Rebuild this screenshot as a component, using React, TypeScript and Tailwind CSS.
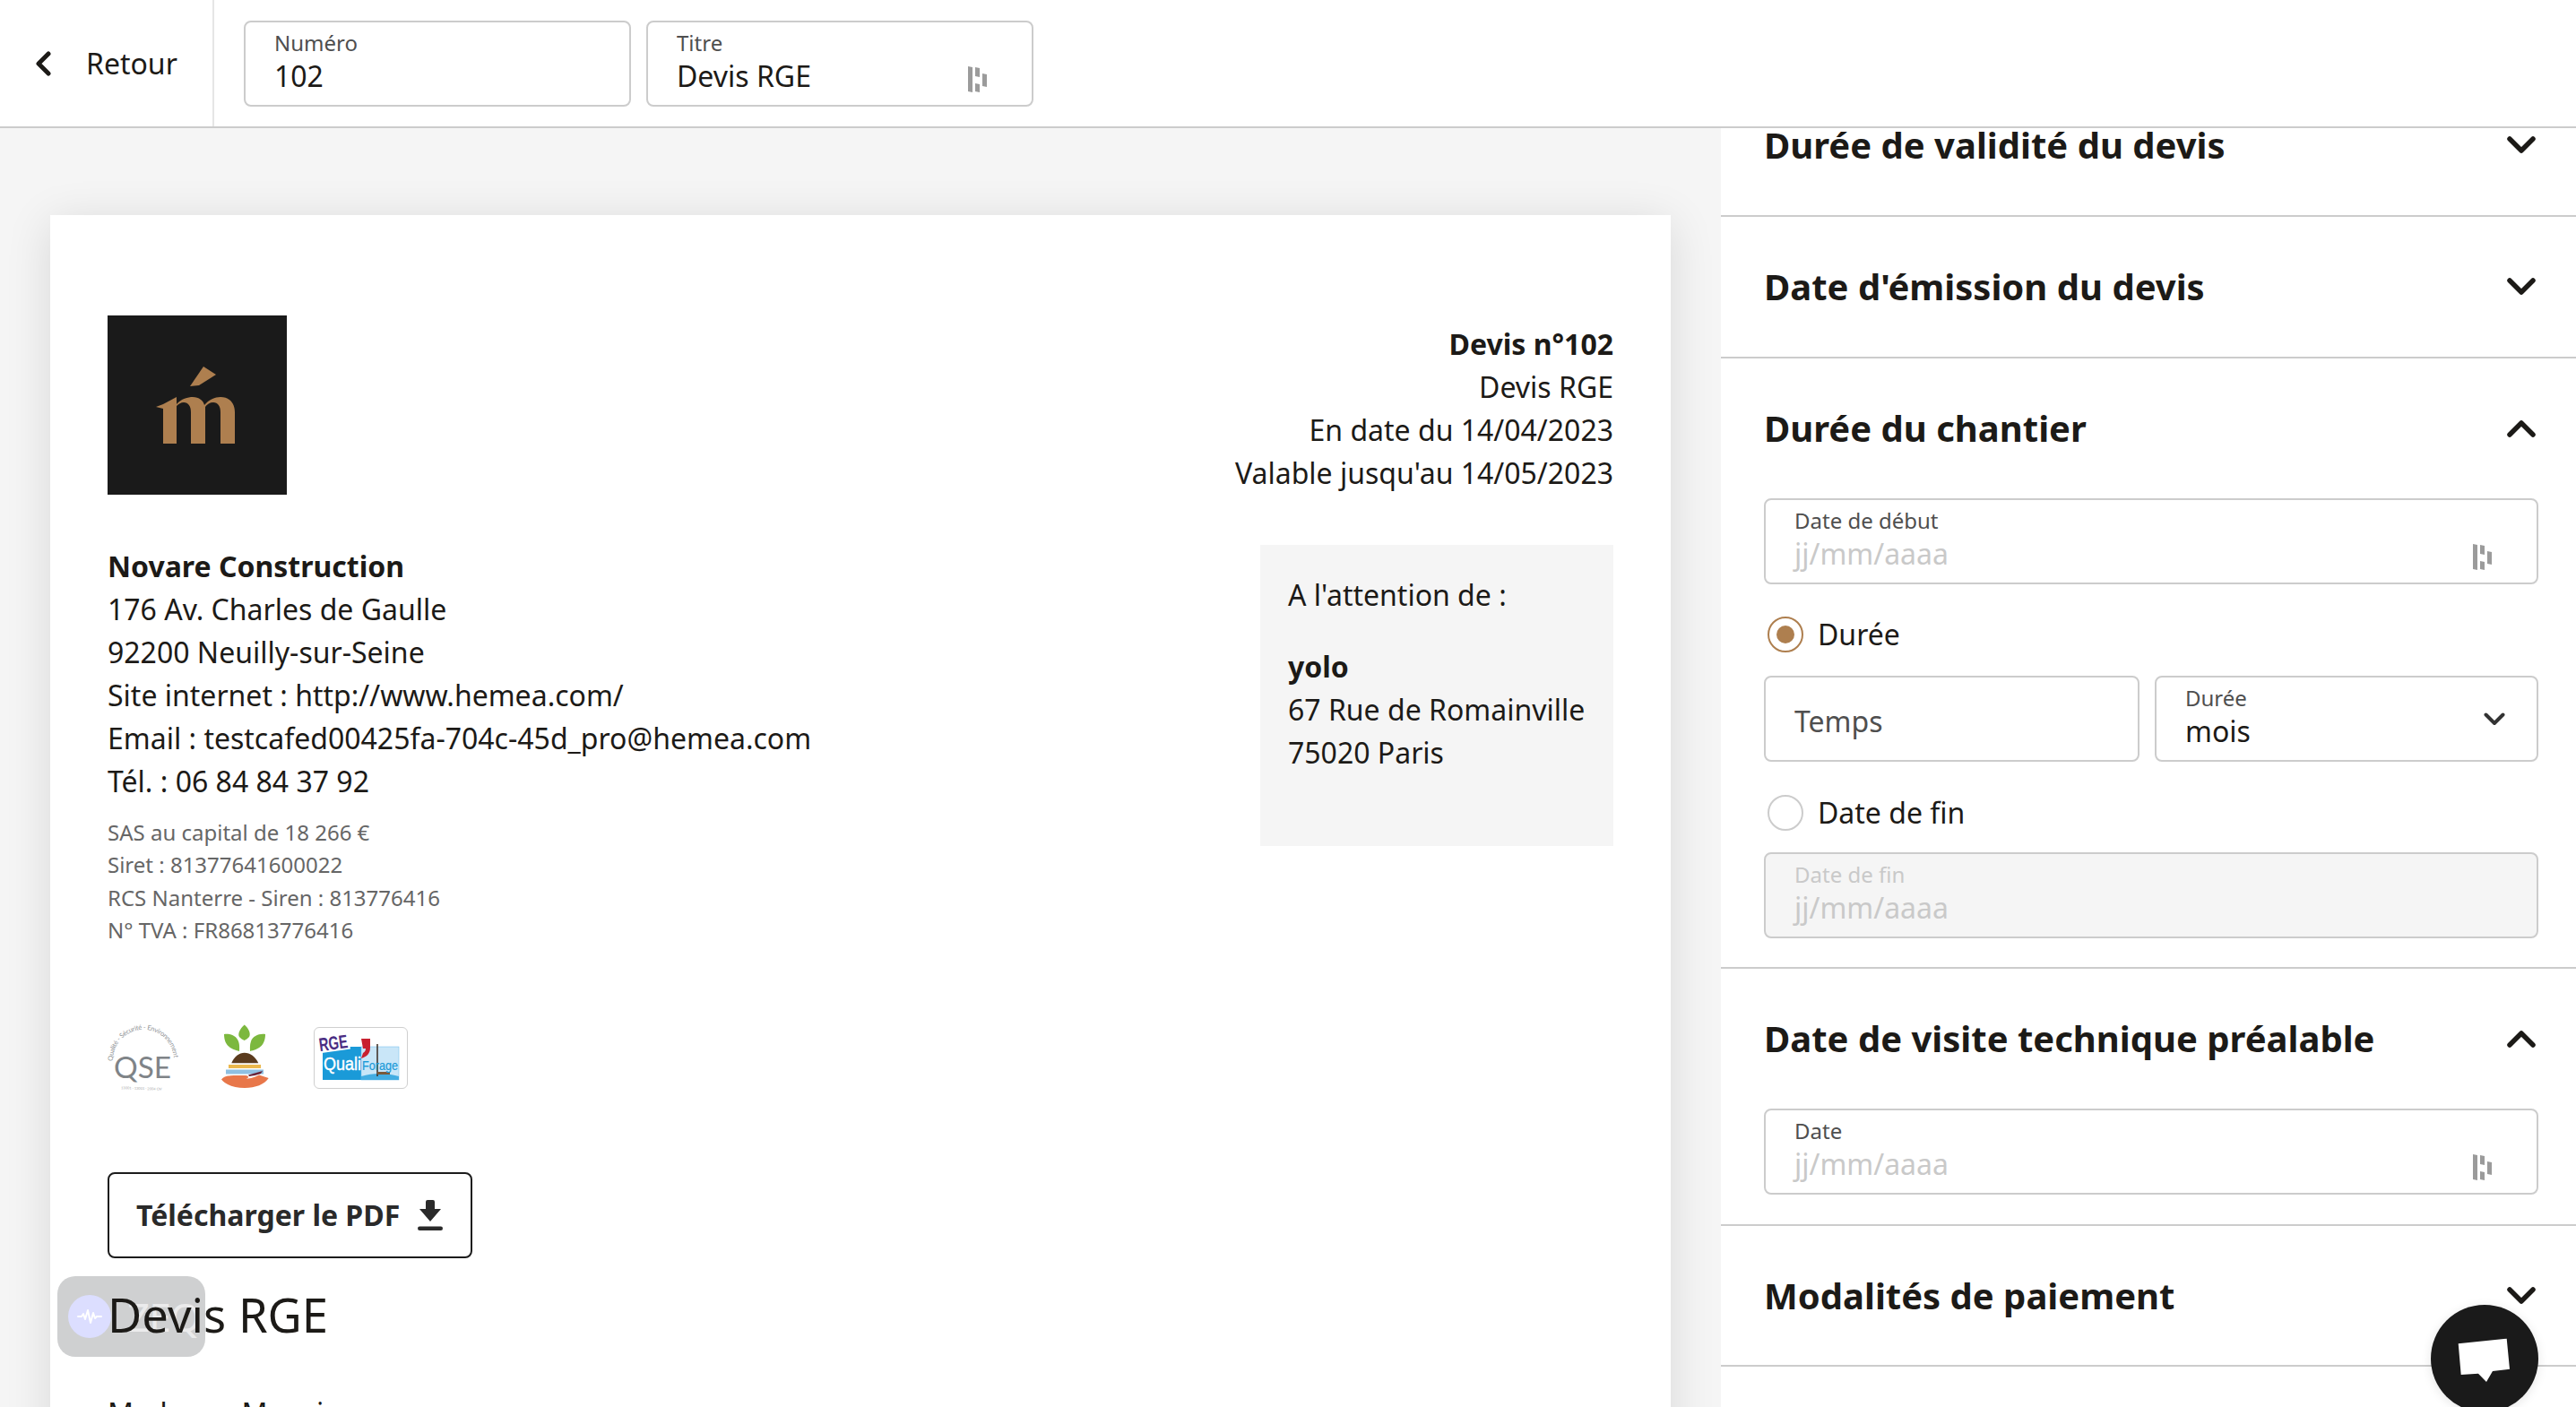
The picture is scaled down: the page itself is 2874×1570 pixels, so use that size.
import React from "react";

const FONT = "font-['Noto_Sans',sans-serif]";

function DashIcon() {
  return (
    <svg viewBox="0 0 21 29" className="absolute right-[50px] bottom-[14px] w-[21px] h-[29px]" fill="#9b9b9b">
      <path d="M0 0l5 1v28l-5-1z" />
      <path d="M8 1l5 1v10l-5-1z" />
      <path d="M8 19l5 1v9l-5-1z" />
      <path d="M16 8l5 1v14l-5-1z" />
    </svg>
  );
}

function Field({ label, value, icon, muted, disabled, className }: { label: string; value: string; icon?: boolean; muted?: boolean; disabled?: boolean; className: string }) {
  return (
    <div className={`relative h-[96px] rounded-lg border-2 border-[#cccccc] px-8 pt-[7px] ${disabled ? "bg-[#f5f5f5]" : "bg-white"} ${className}`}>
      <div className={`text-[24px] leading-[32px] ${disabled ? "text-[#c9c9c9]" : "text-[#4f4f4f]"}`}>{label}</div>
      <div className={`text-[32px] leading-[42px] ${muted ? "text-[#c9c9c9]" : "text-[#1c1a17]"}`}>{value}</div>
      {icon && <DashIcon />}
    </div>
  );
}

function Chevron({ up }: { up?: boolean }) {
  return (
    <svg viewBox="0 0 32 20" className="w-[32px] h-[20px]" fill="none" stroke="#1c1a17" strokeWidth="5.5" strokeLinecap="round" strokeLinejoin="round">
      <polyline points={up ? "3,17 16,4 29,17" : "3,3 16,16 29,3"} />
    </svg>
  );
}

function SectionHead({ title, up, className }: { title: string; up?: boolean; className: string }) {
  return (
    <div className={`flex items-center justify-between pl-12 pr-[45px] ${className}`}>
      <h2 className="text-[40px] leading-[56px] font-bold text-[#1c1a17]">{title}</h2>
      <Chevron up={up} />
    </div>
  );
}

function Radio({ checked, label }: { checked?: boolean; label: string }) {
  return (
    <div className="flex items-center h-[40px] pl-[4px] gap-[16px]">
      <span className={`w-[40px] h-[40px] rounded-full border-2 flex items-center justify-center ${checked ? "border-[#ae7f4f]" : "border-[#cccccc]"}`}>
        {checked && <span className="w-[20px] h-[20px] rounded-full bg-[#ae7f4f]" />}
      </span>
      <span className="text-[32px] leading-[48px] text-[#1c1a17]">{label}</span>
    </div>
  );
}

function Logo() {
  return (
    <svg viewBox="0 0 200 200" className="w-[200px] h-[200px] block">
      <rect width="200" height="200" fill="#1a1a1a" />
      <path fill="#ae7f4f" d="M107 57L121 66L102 78L92 79Z" />
      <path fill="#ae7f4f" d="M54 102L62 99L77 91V99C82 93 90 91 95 91C102 91 107 95 108 100C113 94 120 91 126 91C136 91 142 98 142 108V143H126V108C126 101 123 97 118 97C114 97 111 99 109 102V143H93V108C93 101 90 97 85 97C82 97 79 99 77 101V143H62V104Z" />
    </svg>
  );
}

function QseLogo() {
  return (
    <svg viewBox="0 0 80 78" className="w-[80px] h-[78px] block overflow-visible">
      <defs>
        <path id="qse-arc" d="M6 42A34 34 0 1 1 74 40" />
      </defs>
      <text fontFamily="Lato" fontSize="7.5" fill="#8f9396">
        <textPath href="#qse-arc" textLength="105">Qualité - Sécurité - Environnement</textPath>
      </text>
      <text x="7" y="61" fontFamily="Lato" fontSize="33" fontWeight="400" fill="#7f8488" textLength="64" lengthAdjust="spacingAndGlyphs">QSE</text>
      <text x="15" y="74" fontFamily="Lato" fontSize="4" fill="#a5a7a9" transform="rotate(2 40 74)">13001 · 13001 · 2004 OV</text>
    </svg>
  );
}

function LeafLogo() {
  return (
    <svg viewBox="0 0 53 71" className="w-[53px] h-[71px] block">
      <path fill="#7cb83e" d="M25.7 0.5C31 5 33 11 31 14C29.5 16 27 17 25.7 18C24 17 21.500 16 20 14C18 11 20.500 5 25.700 0.500Z" />
      <path fill="#7cb83e" d="M3 11C10 10 17 13 19 19C20.500 23 20 27 20 30C12 28 3 25 3 11Z" />
      <path fill="#7cb83e" d="M49 11C42 10 35 13 33 19C31.500 23 32 27 32 30C40 28 49 25 49 11Z" />
      <path fill="#5b3b1e" d="M11.300 43.300C14 36 20 31.700 25.700 31.700C32 31.700 38 36 41.300 43.300Z" />
      <rect x="8" y="45" width="36" height="4" fill="#ebb84d" />
      <rect x="5" y="50.500" width="42" height="5" fill="#8fc0e2" />
      <path fill="#e8774a" d="M0 61.500C3 58 8 57 14 57H27C31 57 31 60.500 27 61H20C28 61.500 36 60 42 56.500L52.700 60C48 67 38 71 26 71C14 71 4 67 0 61.500Z" />
      <path fill="#6a2338" d="M30 56.500L46 52L44 55C40 56.500 35 57.500 31 58Z" />
    </svg>
  );
}

function RgeLogo() {
  return (
    <div className="w-[105px] h-[69px] rounded-[6px] border border-[#cfcfcf] bg-white overflow-hidden">
      <svg viewBox="0 0 103 67" className="w-full h-full block">
        <rect x="9" y="21" width="43" height="37" fill="#1a9ad8" />
        <rect x="52" y="21" width="42" height="37" fill="#c9e6f8" stroke="#6cbdea" strokeWidth="0.5" />
        <path d="M52 54C65 50 80 50 94 54V58H52Z" fill="#43ade2" />
        <path d="M70 18V54" stroke="#3a2a20" strokeWidth="1.500" />
        <rect x="70" y="49" width="14" height="3" fill="#7a5a3a" />
        <path d="M52 12H62V22C62 29 58 32 52 34L54 28C56 27 57 25 57 23H54Z" fill="#c8202f" />
        <g transform="rotate(-8 22 18)">
          <rect x="3" y="7" width="36" height="19" fill="#ffffff" />
          <text x="5" y="24" fontFamily="Liberation Sans" fontSize="21" fontWeight="700" fill="#4b2e83" textLength="32" lengthAdjust="spacingAndGlyphs">RGE</text>
        </g>
        <text x="10" y="47" fontFamily="Liberation Sans" fontSize="20" fill="#ffffff" stroke="#ffffff" strokeWidth="0.4" textLength="42" lengthAdjust="spacingAndGlyphs">Quali</text>
        <text x="53" y="47" fontFamily="Liberation Sans" fontSize="15" fill="#1a9ad8" stroke="#1a9ad8" strokeWidth="0.2" textLength="40" lengthAdjust="spacingAndGlyphs">Forage</text>
      </svg>
    </div>
  );
}

export default function App() {
  return (
    <div className={`relative w-[2874px] h-[1570px] overflow-hidden bg-[#f5f5f5] text-[#1c1a17] ${FONT}`}>
      <header className="relative z-10 h-[143px] bg-white border-b-2 border-[#cccccc] flex">
        <div className="w-[239px] border-r-2 border-[#e6e6e6] flex items-center pl-[39px] gap-[39px]">
          <svg viewBox="0 0 18 28" className="w-[18px] h-[28px]" fill="none" stroke="#1c1a17" strokeWidth="5" strokeLinecap="round" strokeLinejoin="round">
            <polyline points="15,3 4,14 15,25" />
          </svg>
          <span className="text-[32px] leading-[48px]">Retour</span>
        </div>
        <div className="flex pl-[33px] pt-[23px] gap-[17px]">
          <Field label="Numéro" value="102" className="w-[432px]" />
          <Field label="Titre" value="Devis RGE" icon className="w-[432px]" />
        </div>
      </header>

      <div className="flex h-[1427px]">
        <main className="flex-1 pl-[56px] pt-[97px] overflow-hidden">
          <article className="relative w-[1808px] h-[1500px] bg-white shadow-[0_8px_48px_rgba(0,0,0,0.12)] px-16 pt-[112px] text-[32px] leading-[48px]">
            <div className="flex justify-between">
              <div>
                <Logo />
                <div className="mt-[56px]">
                  <div className="font-bold">Novare Construction</div>
                  <div>176 Av. Charles de Gaulle</div>
                  <div>92200 Neuilly-sur-Seine</div>
                  <div>Site internet : http://www.hemea.com/</div>
                  <div>Email : testcafed00425fa-704c-45d_pro@hemea.com</div>
                  <div>Tél. : 06 84 84 37 92</div>
                </div>
                <div className="mt-[15px] text-[24px] leading-[36.300px] text-[#666666]">
                  <div>SAS au capital de 18 266 €</div>
                  <div>Siret : 81377641600022</div>
                  <div>RCS Nanterre - Siren : 813776416</div>
                  <div>N° TVA : FR86813776416</div>
                </div>
              </div>
              <div className="pt-[8px] flex flex-col items-end">
                <div className="text-right">
                  <div className="font-bold">Devis n°102</div>
                  <div>Devis RGE</div>
                  <div>En date du 14/04/2023</div>
                  <div>Valable jusqu'au 14/05/2023</div>
                </div>
                <div className="mt-[56px] w-[394px] h-[336px] bg-[#f5f5f5] pl-[31px] pt-[32px] whitespace-nowrap">
                  <div>A l'attention de :</div>
                  <div className="mt-[32px] font-bold">yolo</div>
                  <div>67 Rue de Romainville</div>
                  <div>75020 Paris</div>
                </div>
              </div>
            </div>
            <div className="flex items-start mt-[86px]">
              <QseLogo />
              <div className="ml-[47px] mt-[1px]"><LeafLogo /></div>
              <div className="ml-[50px] mt-[4px]"><RgeLogo /></div>
            </div>
            <button className="mt-[88px] w-[407px] h-[96px] rounded-lg border-2 border-[#1c1c1c] flex items-center pl-[30px] gap-[20px] font-bold text-[32px] text-[#2a2a2a]">
              <span>Télécharger le PDF</span>
              <svg viewBox="0 0 28 34" className="w-[28px] h-[34px]" fill="#2a2a2a">
                <path d="M9 2a2 2 0 0 1 2-2h6a2 2 0 0 1 2 2V10h7L14 24L2 10h7Z" />
                <rect x="0" y="29.500" width="28" height="4.500" rx="2.200" />
              </svg>
            </button>
            <h1 className="relative z-[6] mt-[27px] text-[52.500px] leading-[72px] font-normal">Devis RGE</h1>
            <p className="mt-[50px]">Madame, Monsieur</p>
          </article>
        </main>

        <aside className="w-[954px] bg-white overflow-hidden">
          <div className="-mt-[59px]">
            <SectionHead title="Durée de validité du devis" className="h-[158px] border-b-2 border-[#cccccc]" />
            <SectionHead title="Date d'émission du devis" className="h-[158px] border-b-2 border-[#cccccc]" />
            <section className="border-b-2 border-[#cccccc] pb-[32px]">
              <SectionHead title="Durée du chantier" up className="h-[156px]" />
              <div className="pl-12 pr-[42px] flex flex-col">
                <Field label="Date de début" value="jj/mm/aaaa" muted icon className="" />
                <div className="mt-[36px]"><Radio checked label="Durée" /></div>
                <div className="mt-[26px] flex gap-[17px]">
                  <div className="w-[419px] h-[96px] rounded-lg border-2 border-[#cccccc] px-8 pt-[6px] flex items-center text-[32px] text-[#4f4f4f]">Temps</div>
                  <div className="relative flex-1">
                    <Field label="Durée" value="mois" className="" />
                    <svg viewBox="0 0 24 15" className="absolute right-[37px] top-[41px] w-[24px] h-[15px]" fill="none" stroke="#333333" strokeWidth="4" strokeLinecap="round" strokeLinejoin="round">
                      <polyline points="2.500,2.500 12,12 21.500,2.500" />
                    </svg>
                  </div>
                </div>
                <div className="mt-[37px]"><Radio label="Date de fin" /></div>
                <Field label="Date de fin" value="jj/mm/aaaa" muted disabled className="mt-[24px]" />
              </div>
            </section>
            <section className="border-b-2 border-[#cccccc] pb-[33px]">
              <SectionHead title="Date de visite technique préalable" up className="h-[156px]" />
              <div className="pl-12 pr-[42px]">
                <Field label="Date" value="jj/mm/aaaa" muted icon className="" />
              </div>
            </section>
            <SectionHead title="Modalités de paiement" className="h-[157px] border-b-2 border-[#cccccc]" />
          </div>
        </aside>
      </div>

      <div className="absolute z-[5] left-[64px] top-[1424px] w-[165px] h-[90px] rounded-[20px] bg-[#cfd0d1] flex items-center pl-[12px] gap-[18px] overflow-hidden">
        <span className="w-[48px] h-[48px] shrink-0 rounded-full bg-[#dcdeff] flex items-center justify-center">
          <svg viewBox="0 0 28 18" className="w-[28px] h-[18px]" fill="none" stroke="#ffffff" strokeWidth="2" strokeLinecap="round" strokeLinejoin="round">
            <polyline points="1,9 5,9 7,6 9,12 12,2 15,16 18,5 20,11 22,9 27,9" />
          </svg>
        </span>
        <span className="text-[44px] leading-none text-white/60 font-normal tracking-[-1px]">ZEQ</span>
      </div>

      <div className="absolute z-20 left-[2712px] top-[1456px] w-[120px] h-[120px] rounded-full bg-[#1a1a1a] shadow-[0_2px_12px_rgba(0,0,0,0.1)]">
        <svg viewBox="0 0 120 120" className="w-[120px] h-[120px]">
          <polygon fill="#ffffff" points="30.700,43.300 84.700,37.700 88,71.700 69,74 62,86 53,76.700 33.700,78" />
        </svg>
      </div>
    </div>
  );
}
